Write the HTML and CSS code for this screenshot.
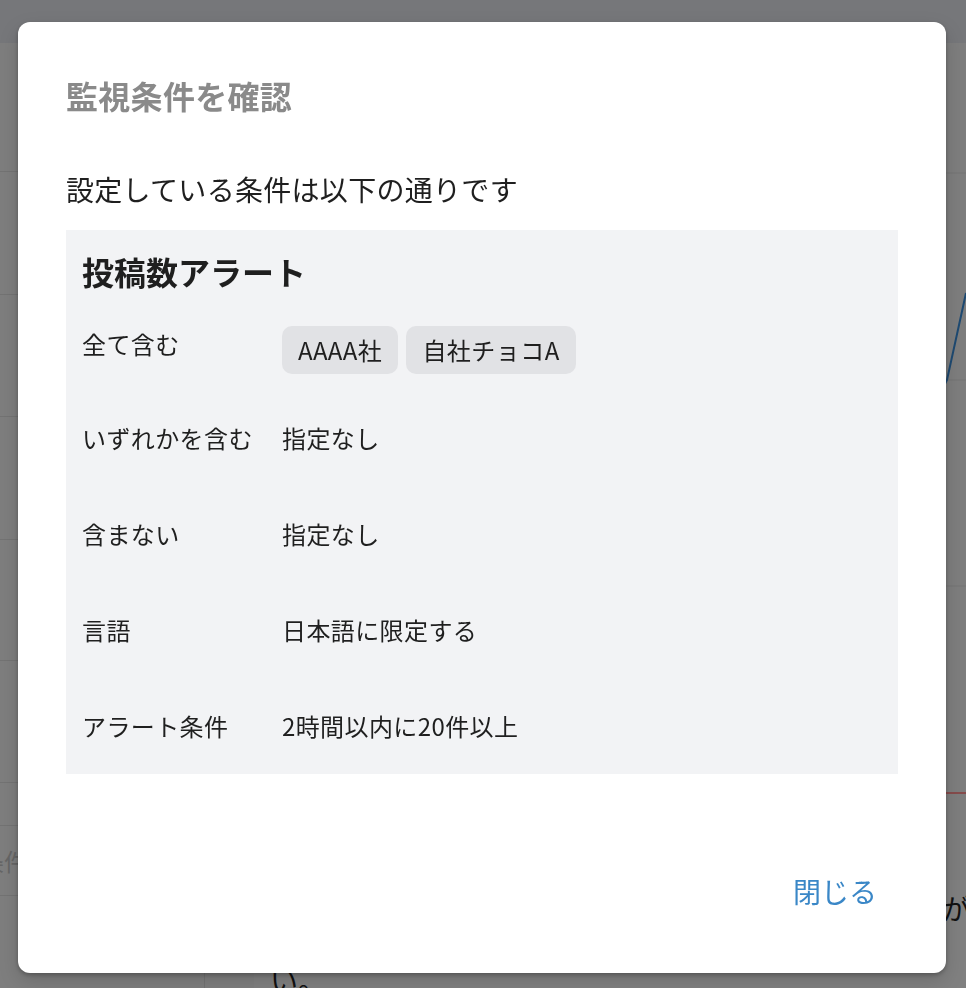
FILE: index.html
```html
<!DOCTYPE html>
<html lang="ja">
<head>
<meta charset="utf-8">
<title>監視条件を確認</title>
<link rel="stylesheet" href="styles.css">
</head>
<body>
<div class="page">
  <header class="page-header"></header>
  <div class="page-body">
    <div class="table-col">
      <div class="trow r1"></div>
      <div class="trow r2"></div>
      <div class="trow r3"></div>
      <div class="trow r4"></div>
      <div class="trow r5"></div>
      <div class="trow r6"></div>
      <div class="trow r7"></div>
      <div class="trow r8"><span class="cut-label">条件</span></div>
      <div class="trow r9"></div>
    </div>
    <div class="right-col">
      <div class="chart">
        <svg width="761" height="837" viewBox="0 0 761 837">
          <line x1="0" y1="130" x2="761" y2="130" stroke="#747474" stroke-width="1"/>
          <line x1="0" y1="337" x2="761" y2="337" stroke="#747474" stroke-width="1"/>
          <line x1="0" y1="543" x2="761" y2="543" stroke="#747474" stroke-width="1"/>
          <line x1="0" y1="750" x2="761" y2="750" stroke="#8a3d3d" stroke-width="1.5"/>
          <polyline points="700,420 742,337 761,250" fill="none" stroke="#1e4a72" stroke-width="2"/>
        </svg>
      </div>
      <div class="note">
        <p class="note-text">投稿数が設定した条件を超えたため、メール通知配信が行われます<br>最終更新日時は次の通りです　集計期間 2024.11.11<br>い。</p>
      </div>
    </div>
  </div>
</div>

<div class="overlay">
  <div class="modal" role="dialog" aria-labelledby="dlg-title">
    <h2 class="modal-title" id="dlg-title">監視条件を確認</h2>
    <p class="modal-lead">設定している条件は以下の通りです</p>
    <section class="cond-panel">
      <h3 class="cond-title">投稿数アラート</h3>
      <div class="cond-row cond-row-first">
        <div class="cond-label">全て含む</div>
        <div class="cond-value chips">
          <span class="chip">AAAA社</span>
          <span class="chip">自社チョコA</span>
        </div>
      </div>
      <div class="cond-row">
        <div class="cond-label">いずれかを含む</div>
        <div class="cond-value">指定なし</div>
      </div>
      <div class="cond-row">
        <div class="cond-label">含まない</div>
        <div class="cond-value">指定なし</div>
      </div>
      <div class="cond-row">
        <div class="cond-label">言語</div>
        <div class="cond-value">日本語に限定する</div>
      </div>
      <div class="cond-row">
        <div class="cond-label">アラート条件</div>
        <div class="cond-value">2時間以内に20件以上</div>
      </div>
    </section>
    <div class="modal-footer">
      <button class="btn-text" type="button">閉じる</button>
    </div>
  </div>
</div>
</body>
</html>
```
FILE: styles.css
```css
* { box-sizing: border-box; }

html, body {
  margin: 0;
  padding: 0;
}

body {
  width: 966px;
  height: 988px;
  overflow: hidden;
  background: #7e7e7e;
  font-family: "Noto Sans CJK JP", "Noto Sans", sans-serif;
  color: #1f1f1f;
}

/* ---------- dimmed page behind the dialog ---------- */
.page {
  height: 988px;
  display: flex;
  flex-direction: column;
}

.page-header {
  flex: none;
  height: 43px;
  background: #76777a;
}

.page-body {
  flex: 1;
  display: grid;
  grid-template-columns: 205px 1fr;
  min-height: 0;
}

.table-col {
  display: flex;
  flex-direction: column;
  border-right: 1px solid #737373;
}

.trow {
  flex: none;
  border-bottom: 1px solid #737373;
  display: flex;
  align-items: center;
  overflow: hidden;
}
.r1 { height: 129px; }
.r2 { height: 123px; }
.r3 { height: 122px; }
.r4 { height: 123px; }
.r5 { height: 121px; }
.r6 { height: 122px; }
.r7 { height: 43px; }
.r8 { height: 70px; }
.r9 { flex: 1; border-bottom: none; }

.cut-label {
  margin-left: -20px;
  font-size: 24px;
  color: #666;
}

.right-col {
  display: flex;
  flex-direction: column;
  min-width: 0;
}

.chart {
  flex: none;
  height: 837px;
  overflow: hidden;
}
.chart svg { display: block; }

.note {
  flex: 1;
  margin-left: 49px;
  background: #808080;
  padding: 10px 0 0 16px;
  overflow: hidden;
}

.note-text {
  margin: 0;
  font-size: 28px;
  line-height: 36px;
  white-space: nowrap;
  color: #111;
}

/* ---------- dialog ---------- */
.overlay {
  position: fixed;
  inset: 0;
  padding: 22px 0 0 18px;
}

.modal {
  width: 928px;
  height: 951px;
  background: #fff;
  border-radius: 12px;
  box-shadow: 0 2px 4px rgba(0, 0, 0, 0.25), 0 8px 20px rgba(0, 0, 0, 0.15);
  padding: 49px 48px 49px;
  display: flex;
  flex-direction: column;
}

.modal-title {
  margin: 0 0 49px;
  font-size: 32px;
  line-height: 48px;
  font-weight: 700;
  letter-spacing: 0.3px;
  color: #8a8a8a;
}

.modal-lead {
  margin: 0 0 20px;
  font-size: 28px;
  line-height: 42px;
  letter-spacing: 0.3px;
  color: #1f1f1f;
}

.cond-panel {
  background: #f2f3f5;
  padding: 17px 16px 0;
}

.cond-title {
  margin: 0;
  font-size: 32px;
  line-height: 48px;
  font-weight: 700;
  color: #1f1f1f;
}

.cond-row {
  display: grid;
  grid-template-columns: 200px 1fr;
  align-items: start;
  padding: 30px 0;
  font-size: 24px;
  line-height: 36px;
  letter-spacing: 0.4px;
  color: #1f1f1f;
}

.cond-row-first {
  padding: 31px 0 16px;
}

.chips {
  display: flex;
  flex-wrap: wrap;
  gap: 8px;
}

.chip {
  display: inline-block;
  padding: 6px 16px;
  border-radius: 10px;
  background: #e1e2e5;
  font-size: 24px;
  line-height: 36px;
  letter-spacing: 0.5px;
  color: #1f1f1f;
}

.modal-footer {
  margin-top: auto;
  display: flex;
  justify-content: flex-end;
}

.btn-text {
  border: none;
  background: transparent;
  padding: 12px 21px 12px 24px;
  font-family: inherit;
  font-size: 28px;
  line-height: 42px;
  color: #3a87c7;
  cursor: pointer;
}
```
